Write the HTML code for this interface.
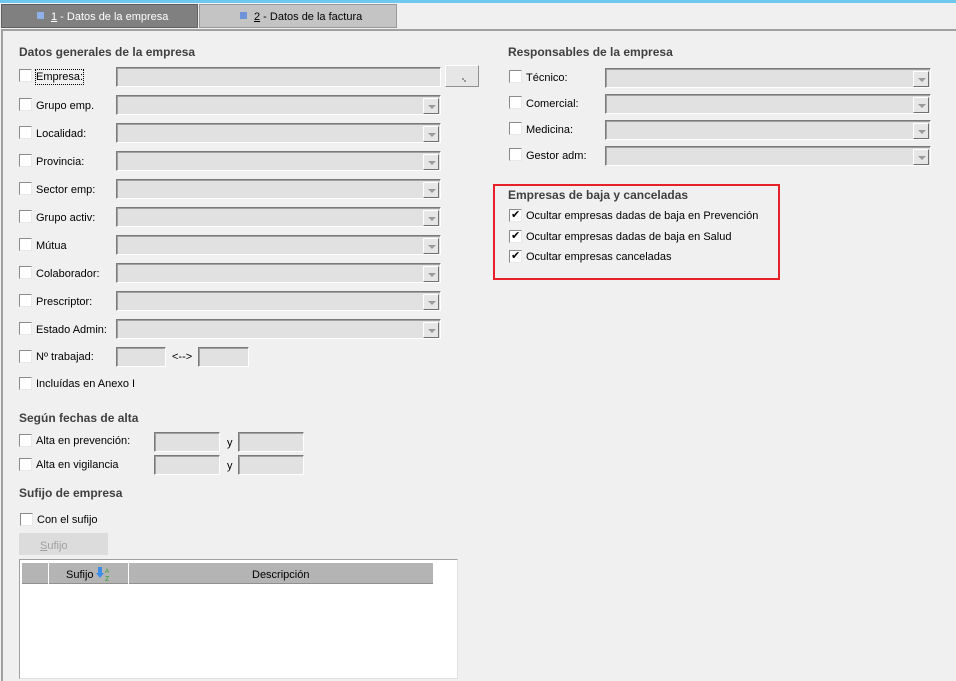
<!DOCTYPE html><html><head><meta charset="utf-8"><style>
body{margin:0;width:956px;height:681px;background:#f0f0f0;position:relative;overflow:hidden;font-family:"Liberation Sans",sans-serif;font-size:11px;color:#000}
div,span{position:absolute;box-sizing:border-box}
.cb{width:13px;height:13px;background:#fff;border:1px solid;border-color:#8a8a8a #e8e8e8 #e8e8e8 #8a8a8a}
.lb{white-space:nowrap;line-height:14px;margin-top:1px}
.in{background:#e1e1e1;border:1px solid;border-color:#7a7a7a #fff #fff #7a7a7a;box-shadow:inset 1px 1px 0 #a0a0a0;height:20px}
.dd{position:absolute;right:1px;top:2px;width:16px;height:16px;background:#e6e6e6;border:1px solid;border-color:#fff #707070 #707070 #fff}
.dd:after{content:"";position:absolute;left:4px;top:6px;border-left:4px solid transparent;border-right:4px solid transparent;border-top:4px solid #9a9a9a}
.h{font-weight:bold;font-size:12px;color:#404040;white-space:nowrap}
.ck:after{content:"✔";position:absolute;left:1px;top:-2px;font-size:11px;color:#000}
</style></head><body>
<div style="left:0;top:0;width:956px;height:3px;background:#6cc8ec"></div>
<div style="left:1px;top:4px;width:197px;height:24px;background:#808080;border:1px solid #606060"></div>
<div style="left:37px;top:12px;width:7px;height:7px;background:#8fb0e8"></div>
<div class="lb" style="left:51px;top:9px;color:#fff"><u>1</u> - Datos de la empresa</div>
<div style="left:199px;top:4px;width:198px;height:24px;background:#c4c4c4;border:1px solid #9a9a9a"></div>
<div style="left:240px;top:12px;width:7px;height:7px;background:#6f93d8"></div>
<div class="lb" style="left:254px;top:9px"><u>2</u> - Datos de la factura</div>
<div style="left:1px;top:29px;width:955px;height:652px;border-top:2px solid #a0a0a0;border-left:2px solid #a0a0a0"></div>

<div class="h" style="left:19px;top:45px">Datos generales de la empresa</div>

<div class="cb" style="left:19px;top:69px"></div><div class="lb" style="left:36px;top:69px;outline:1px dotted #000">Empresa:</div>
<div class="in" style="left:116px;top:67px;width:325px"></div>
<div style="left:445px;top:65px;width:34px;height:22px;background:#e6e6e6;border:1px solid;border-color:#fff #909090 #909090 #fff"><span style="left:16px;top:12px;width:2px;height:2px;background:#999"></span><span style="left:18px;top:14px;width:2px;height:2px;background:#999"></span></div>

<div class="cb" style="left:19px;top:98px"></div><div class="lb" style="left:36px;top:98px">Grupo emp.</div><div class="in" style="left:116px;top:95px;width:325px"><span class="dd"></span></div>
<div class="cb" style="left:19px;top:126px"></div><div class="lb" style="left:36px;top:126px">Localidad:</div><div class="in" style="left:116px;top:123px;width:325px"><span class="dd"></span></div>
<div class="cb" style="left:19px;top:154px"></div><div class="lb" style="left:36px;top:154px">Provincia:</div><div class="in" style="left:116px;top:151px;width:325px"><span class="dd"></span></div>
<div class="cb" style="left:19px;top:182px"></div><div class="lb" style="left:36px;top:182px">Sector emp:</div><div class="in" style="left:116px;top:179px;width:325px"><span class="dd"></span></div>
<div class="cb" style="left:19px;top:210px"></div><div class="lb" style="left:36px;top:210px">Grupo activ:</div><div class="in" style="left:116px;top:207px;width:325px"><span class="dd"></span></div>
<div class="cb" style="left:19px;top:238px"></div><div class="lb" style="left:36px;top:238px">Mútua</div><div class="in" style="left:116px;top:235px;width:325px"><span class="dd"></span></div>
<div class="cb" style="left:19px;top:266px"></div><div class="lb" style="left:36px;top:266px">Colaborador:</div><div class="in" style="left:116px;top:263px;width:325px"><span class="dd"></span></div>
<div class="cb" style="left:19px;top:294px"></div><div class="lb" style="left:36px;top:294px">Prescriptor:</div><div class="in" style="left:116px;top:291px;width:325px"><span class="dd"></span></div>
<div class="cb" style="left:19px;top:322px"></div><div class="lb" style="left:36px;top:322px">Estado Admin:</div><div class="in" style="left:116px;top:319px;width:325px"><span class="dd"></span></div>
<div class="cb" style="left:19px;top:350px"></div><div class="lb" style="left:36px;top:349px">Nº trabajad:</div>
<div class="in" style="left:116px;top:347px;width:50px"></div><div class="lb" style="left:172px;top:349px">&lt;--&gt;</div><div class="in" style="left:198px;top:347px;width:51px"></div>
<div class="cb" style="left:19px;top:377px"></div><div class="lb" style="left:36px;top:376px">Incluídas en Anexo I</div>

<div class="h" style="left:19px;top:411px">Según fechas de alta</div>
<div class="cb" style="left:19px;top:434px"></div><div class="lb" style="left:36px;top:433px">Alta en prevención:</div>
<div class="in" style="left:154px;top:432px;width:66px"></div><div class="lb" style="left:227px;top:435px">y</div><div class="in" style="left:238px;top:432px;width:66px"></div>
<div class="cb" style="left:19px;top:458px"></div><div class="lb" style="left:36px;top:457px">Alta en vigilancia</div>
<div class="in" style="left:154px;top:455px;width:66px"></div><div class="lb" style="left:227px;top:458px">y</div><div class="in" style="left:238px;top:455px;width:66px"></div>

<div class="h" style="left:19px;top:486px">Sufijo de empresa</div>
<div class="cb" style="left:20px;top:513px"></div><div class="lb" style="left:37px;top:512px">Con el sufijo</div>
<div style="left:19px;top:533px;width:89px;height:22px;background:#dcdcdc"></div><div class="lb" style="left:40px;top:538px;color:#a0a0a0"><u>S</u>ufijo</div>
<div style="left:19px;top:559px;width:439px;height:120px;background:#fff;border:1px solid;border-color:#a0a0a0 #e0e0e0 #e0e0e0 #a0a0a0"></div>
<div style="left:22px;top:563px;width:411px;height:21px;background:#b4b4b4;border-bottom:1px solid #909090"></div>
<div style="left:48px;top:563px;width:1px;height:21px;background:#fff"></div>
<div style="left:128px;top:563px;width:1px;height:21px;background:#fff"></div>
<div class="lb" style="left:66px;top:567px">Sufijo</div>
<div style="left:96px;top:566px;width:14px;height:16px"><svg width="14" height="16"><path d="M2 1h4v6h2l-4 5-4-5h2z" fill="#3a8ee8"/><text x="9" y="7" font-size="6" fill="#2a9a2a" font-family="Liberation Sans">A</text><text x="9" y="15" font-size="7" fill="#2a9a2a" font-family="Liberation Sans">Z</text></svg></div>
<div class="lb" style="left:252px;top:567px">Descripción</div>

<div class="h" style="left:508px;top:45px">Responsables de la empresa</div>
<div class="cb" style="left:509px;top:70px"></div><div class="lb" style="left:526px;top:70px">Técnico:</div><div class="in" style="left:605px;top:68px;width:326px"><span class="dd"></span></div>
<div class="cb" style="left:509px;top:96px"></div><div class="lb" style="left:526px;top:96px">Comercial:</div><div class="in" style="left:605px;top:94px;width:326px"><span class="dd"></span></div>
<div class="cb" style="left:509px;top:122px"></div><div class="lb" style="left:526px;top:122px">Medicina:</div><div class="in" style="left:605px;top:120px;width:326px"><span class="dd"></span></div>
<div class="cb" style="left:509px;top:148px"></div><div class="lb" style="left:526px;top:148px">Gestor adm:</div><div class="in" style="left:605px;top:146px;width:326px"><span class="dd"></span></div>

<div style="left:493px;top:184px;width:287px;height:96px;border:2px solid #e8202a"></div>
<div class="h" style="left:508px;top:188px">Empresas de baja y canceladas</div>
<div class="cb ck" style="left:509px;top:209px"></div><div class="lb" style="left:526px;top:208px">Ocultar empresas dadas de baja en Prevención</div>
<div class="cb ck" style="left:509px;top:230px"></div><div class="lb" style="left:526px;top:229px">Ocultar empresas dadas de baja en Salud</div>
<div class="cb ck" style="left:509px;top:250px"></div><div class="lb" style="left:526px;top:249px">Ocultar empresas canceladas</div>
</body></html>
